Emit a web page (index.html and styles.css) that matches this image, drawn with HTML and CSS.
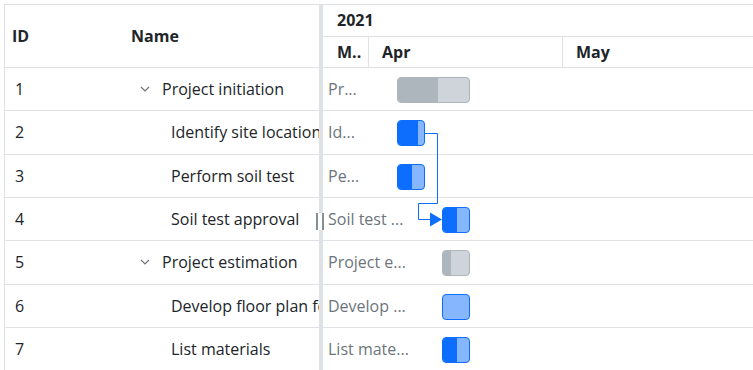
FILE: index.html
```html
<!DOCTYPE html>
<html lang="en">
<head>
    <meta charset="UTF-8">
    <meta name="viewport" content="width=device-width, initial-scale=1.0">
    <title>Gantt Chart</title>
    <link rel="stylesheet" href="styles.css">
</head>
<body>
    <div class="gantt">
        <!-- Tree grid -->
        <div class="grid-pane">
            <div class="grid-header">
                <div class="col-id">ID</div>
                <div class="col-name">Name</div>
            </div>
            <div class="grid-row">
                <div class="col-id">1</div>
                <div class="col-name parent">
                    <svg class="chevron" width="10" height="6" viewBox="0 0 10 6"><polyline points="1,1 5,5 9,1" fill="none" stroke="#6c757d" stroke-width="1.2"/></svg>
                    Project initiation
                </div>
            </div>
            <div class="grid-row">
                <div class="col-id">2</div>
                <div class="col-name child">Identify site location</div>
            </div>
            <div class="grid-row">
                <div class="col-id">3</div>
                <div class="col-name child">Perform soil test</div>
            </div>
            <div class="grid-row">
                <div class="col-id">4</div>
                <div class="col-name child">Soil test approval</div>
            </div>
            <div class="grid-row">
                <div class="col-id">5</div>
                <div class="col-name parent">
                    <svg class="chevron" width="10" height="6" viewBox="0 0 10 6"><polyline points="1,1 5,5 9,1" fill="none" stroke="#6c757d" stroke-width="1.2"/></svg>
                    Project estimation
                </div>
            </div>
            <div class="grid-row">
                <div class="col-id">6</div>
                <div class="col-name child">Develop floor plan for estimation</div>
            </div>
            <div class="grid-row">
                <div class="col-id">7</div>
                <div class="col-name child">List materials</div>
            </div>
        </div>

        <div class="splitter">
            <div class="splitter-handle"><span></span><span></span></div>
        </div>

        <!-- Timeline -->
        <div class="chart-pane">
            <div class="chart-header">
                <div class="year-row">2021</div>
                <div class="month-row">
                    <div class="month month-mar">M..</div>
                    <div class="month month-apr">Apr</div>
                    <div class="month month-may">May</div>
                </div>
            </div>
            <div class="chart-body">
                <div class="chart-row">
                    <span class="bar-label">Pr...</span>
                    <div class="bar bar-parent" style="left: 74px; width: 73px;"><div class="progress" style="width: 57%;"></div></div>
                </div>
                <div class="chart-row">
                    <span class="bar-label">Id...</span>
                    <div class="bar" style="left: 74px; width: 28px;"><div class="progress" style="width: 76%;"></div></div>
                </div>
                <div class="chart-row">
                    <span class="bar-label">Pe...</span>
                    <div class="bar" style="left: 74px; width: 28px;"><div class="progress" style="width: 54%;"></div></div>
                </div>
                <div class="chart-row">
                    <span class="bar-label">Soil test ...</span>
                    <div class="bar" style="left: 119px; width: 28px;"><div class="progress" style="width: 54%;"></div></div>
                </div>
                <div class="chart-row">
                    <span class="bar-label">Project e...</span>
                    <div class="bar bar-parent" style="left: 119px; width: 28px;"><div class="progress" style="width: 30%;"></div></div>
                </div>
                <div class="chart-row">
                    <span class="bar-label">Develop ...</span>
                    <div class="bar" style="left: 119px; width: 28px;"><div class="progress" style="width: 0%;"></div></div>
                </div>
                <div class="chart-row">
                    <span class="bar-label">List mate...</span>
                    <div class="bar" style="left: 119px; width: 28px;"><div class="progress" style="width: 54%;"></div></div>
                </div>

                <!-- dependency: 2 -> 4 -->
                <svg class="connector" width="430" height="302" viewBox="0 0 430 302">
                    <polyline points="102,65.5 114.5,65.5 114.5,135.5 95.5,135.5 95.5,151.5 108,151.5" fill="none" stroke="#0d6efd" stroke-width="1"/>
                    <polygon points="107,144.5 119,151.5 107,158.5" fill="#0d6efd"/>
                </svg>
            </div>
        </div>
    </div>
</body>
</html>
```

FILE: styles.css
```css
:root {
    --border: #dee2e6;
    --text: #212529;
    --muted: #6c757d;
    --blue: #0d6efd;
    --blue-light: #86b7fe;
    --gray-dark: #adb5bd;
    --gray-light: #ced4da;
}

* {
    margin: 0;
    padding: 0;
    box-sizing: border-box;
}

body {
    margin: 4px 0 0 4px;
    font-family: 'Open Sans', 'Noto Sans', sans-serif;
    font-size: 16px;
    color: var(--text);
    background: #fff;
    overflow: hidden;
}

.gantt {
    display: flex;
    border-top: 1px solid var(--border);
    height: 366px;
}

/* Tree grid */
.grid-pane {
    width: 315px;
    flex-shrink: 0;
    border-left: 1px solid var(--border);
    overflow: hidden;
}

.grid-header,
.grid-row {
    display: flex;
    align-items: center;
    border-bottom: 1px solid var(--border);
}

.grid-header {
    height: 63px;
    font-weight: 700;
}

.grid-row {
    height: 43.33px;
}

.col-id {
    width: 118px;
    flex-shrink: 0;
    padding-left: 7px;
}

.grid-row .col-id {
    padding-left: 10px;
}

.col-name {
    flex: 1;
    padding-left: 8px;
    white-space: nowrap;
    overflow: hidden;
}

.col-name.parent {
    display: flex;
    align-items: center;
    padding-left: 17px;
}

.chevron {
    margin-right: 12px;
    flex-shrink: 0;
}

.col-name.child {
    padding-left: 48px;
}

/* Splitter */
.splitter {
    width: 4px;
    flex-shrink: 0;
    background: var(--border);
    position: relative;
}

.splitter-handle {
    position: absolute;
    top: 208px;
    left: -4px;
    width: 10px;
    height: 17px;
    display: flex;
    justify-content: space-between;
    padding: 0 1px;
    background: #fff;
}

.splitter-handle span {
    width: 2px;
    background: #868e96;
}

/* Timeline */
.chart-pane {
    flex: 1;
    overflow: hidden;
}

.chart-header {
    font-weight: 700;
    border-bottom: 1px solid var(--border);
}

.year-row {
    height: 32px;
    line-height: 31px;
    padding-left: 14px;
    border-bottom: 1px solid var(--border);
}

.month-row {
    display: flex;
    height: 30px;
}

.month {
    line-height: 30px;
    padding-left: 13px;
    white-space: nowrap;
}

.month-mar {
    width: 46px;
    padding-left: 14px;
    border-right: 1px solid var(--border);
}

.month-apr {
    width: 194px;
    border-right: 1px solid var(--border);
}

.month-may {
    flex: 1;
}

.chart-body {
    position: relative;
}

.chart-row {
    position: relative;
    height: 43.33px;
    border-bottom: 1px solid var(--border);
    display: flex;
    align-items: center;
}

.bar-label {
    padding-left: 5px;
    color: var(--muted);
    white-space: nowrap;
}

.bar {
    position: absolute;
    top: 9px;
    height: 26px;
    border: 1px solid var(--blue);
    border-radius: 4px;
    background: var(--blue-light);
    overflow: hidden;
}

.bar .progress {
    height: 100%;
    background: var(--blue);
}

.bar-parent {
    border-color: var(--gray-dark);
    background: var(--gray-light);
}

.bar-parent .progress {
    background: var(--gray-dark);
}

.connector {
    position: absolute;
    top: 0;
    left: 0;
    pointer-events: none;
}
```
